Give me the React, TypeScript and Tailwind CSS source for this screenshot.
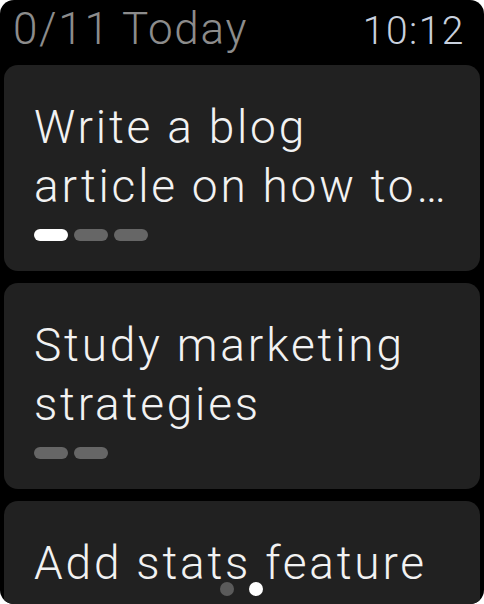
import React from "react";

const font = { fontFamily: "Roboto, 'Liberation Sans', sans-serif" };

function Card({ lines, dots }: { lines: string[]; dots: boolean[] }) {
  return (
    <div className="mx-[4px] shrink-0 rounded-[14px] bg-[#212121] pl-[30px] pr-2 pt-[33px] pb-[30px]">
      <div className="text-[46px] font-light leading-[59px] tracking-[2.8px] text-[#f2f2f2]">
        {lines.map((l, i) => (
          <div key={i} className="whitespace-nowrap">{l}</div>
        ))}
      </div>
      {dots.length > 0 && (
        <div className="mt-[13px] flex gap-[6px]">
          {dots.map((on, i) => (
            <div
              key={i}
              className={
                on
                  ? "h-[12px] w-[34px] rounded-full bg-white"
                  : "h-[12px] w-[34px] rounded-full bg-[#666666]"
              }
            />
          ))}
        </div>
      )}
    </div>
  );
}

export default function App() {
  return (
    <div className="h-[604px] w-[484px] bg-white" style={font}>
      <div className="relative flex h-[604px] w-[484px] flex-col overflow-hidden rounded-[14px] bg-black">
        <div className="flex h-[65px] shrink-0 items-start justify-between pl-[13px] pr-[19px]">
          <div className="mt-[3px] text-[44px] font-light leading-[52px] tracking-[1.7px] text-[#8c8c8c]">0/11 Today</div>
          <div className="mt-[8px] text-[39px] font-light leading-[46px] tracking-[1.5px] text-[#c8d0de]">10:12</div>
        </div>
        <div className="flex flex-col gap-[12px]">
          <Card lines={["Write a blog", "article on how to…"]} dots={[true, false, false]} />
          <Card lines={["Study marketing", "strategies"]} dots={[false, false]} />
          <Card lines={["Add stats feature"]} dots={[]} />
        </div>
        <div className="absolute bottom-[8px] left-0 right-0 flex justify-center gap-[15px] pr-[1px]">
          <div className="h-[14px] w-[14px] rounded-full bg-[#5a5a5a]" />
          <div className="h-[14px] w-[14px] rounded-full bg-white" />
        </div>
      </div>
    </div>
  );
}
